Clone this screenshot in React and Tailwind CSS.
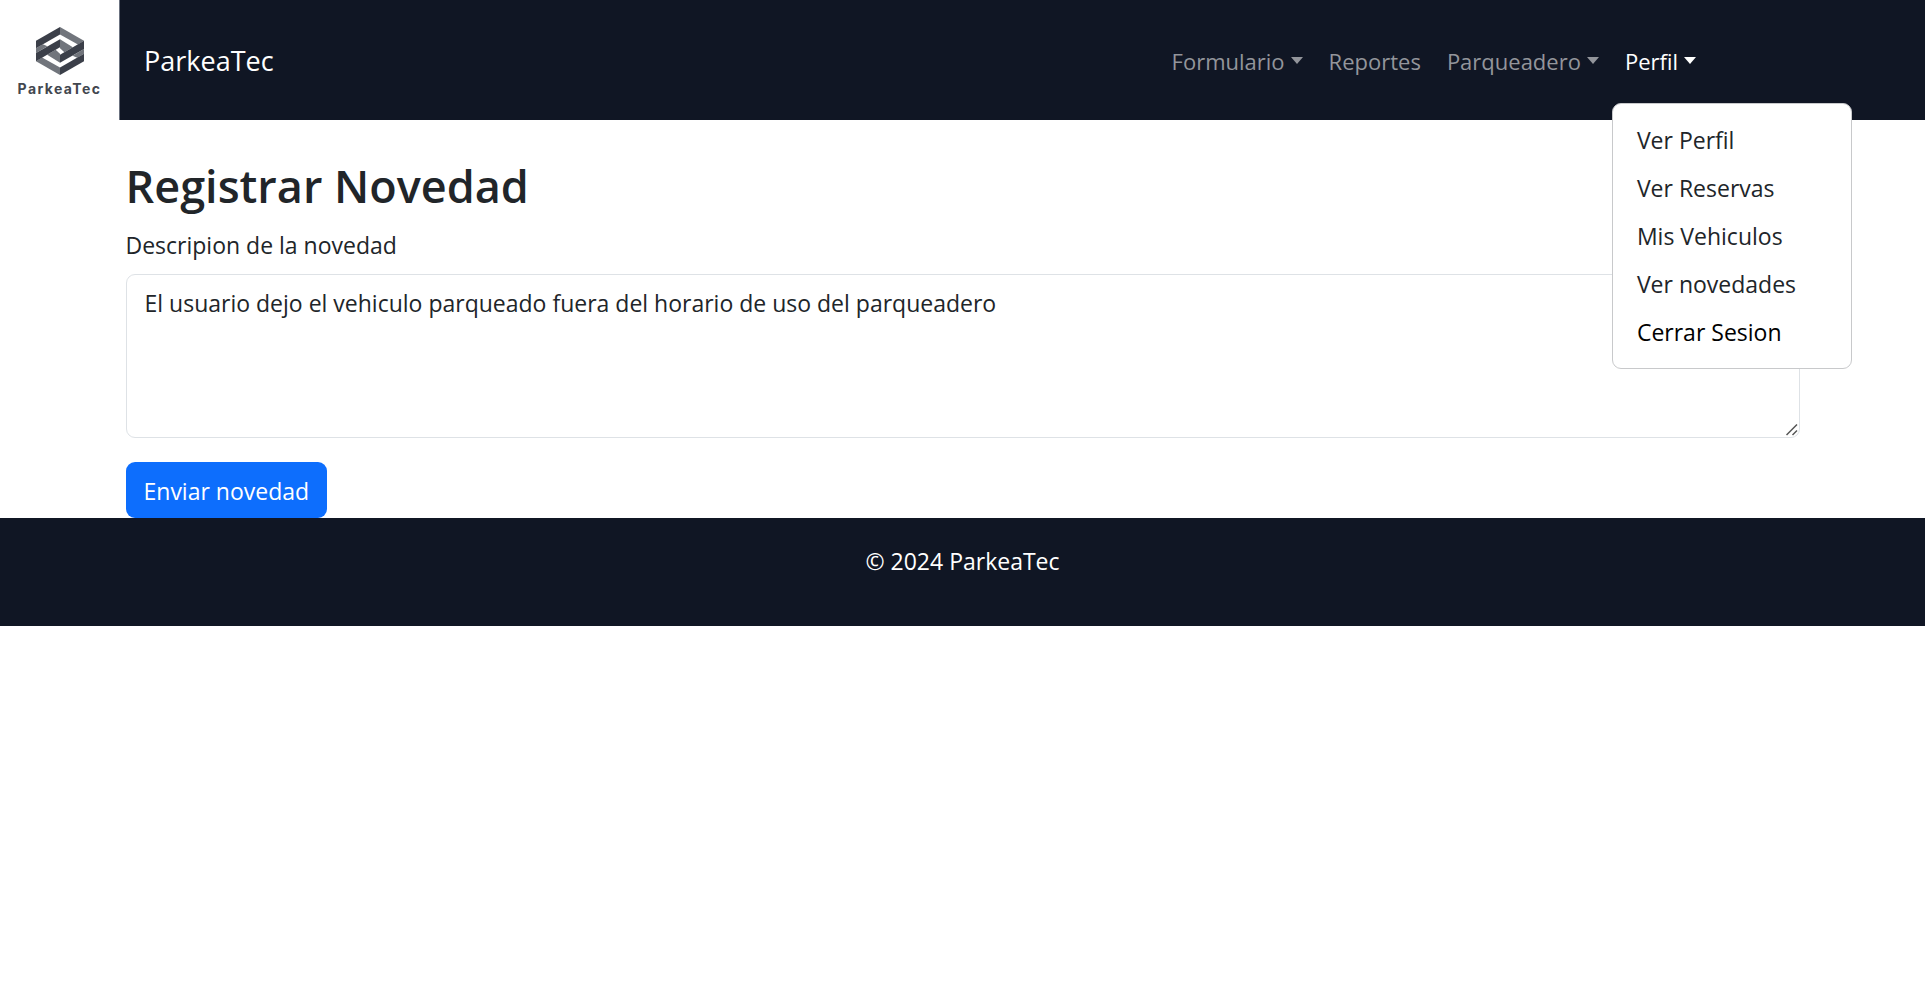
import React from "react";

function Logo() {
  return (
    <a
      href="#inicio"
      aria-label="ParkeaTec inicio"
      className="flex h-[120px] w-[120px] shrink-0 flex-col items-center border-r border-[#6b7280] bg-white pt-[27px] text-[#43474f]"
    >
      <svg viewBox="108 81 142 142" className="h-12 w-12 shrink-0" aria-hidden="true">
        <g fill="#71757c">
          <polygon points="179,81 250,122 232,133 179,103" />
          <polygon points="179,223 108,182 126,171 179,201" />
          <polygon points="179,117 217,141 192,156 179,144" />
          <polygon points="179,187 141,163 166,148 179,160" />
          <polygon points="108,144 128,132 142,138 108,158" />
          <polygon points="250,160 230,172 216,166 250,146" />
        </g>
        <g fill="#3b3f49">
          <polygon points="108,122 179,81 179,103 108,144" />
          <polygon points="250,182 179,223 179,201 250,160" />
          <polygon points="250,122 250,146 179,187 179,163" />
          <polygon points="108,182 108,158 179,117 179,141" />
        </g>
      </svg>
      <span className="mt-1 font-[Inter,sans-serif] text-sm leading-5 font-bold tracking-widest">ParkeaTec</span>
    </a>
  );
}

function Caret() {
  return (
    <svg viewBox="0 0 12 7" className="mb-0.5 ml-1.5 h-[7px] w-3" aria-hidden="true">
      <path d="M0 0h12L6 7z" fill="currentColor" />
    </svg>
  );
}

const menuItems = ["Ver Perfil", "Ver Reservas", "Mis Vehiculos", "Ver novedades"];

function Menu() {
  return (
    <div className="absolute top-full left-0 z-10 mt-[18px] w-60 rounded-[9px] border border-[#c8c9cb] bg-white py-3 text-[23px]">
      {menuItems.map((item) => (
        <a key={item} href="#perfil" className="block px-6 py-1.5 leading-9 text-[#212529]">
          {item}
        </a>
      ))}
      <button type="button" className="block w-full px-6 py-1.5 text-left leading-9 text-black">
        Cerrar Sesion
      </button>
    </div>
  );
}

export default function App() {
  return (
    <div className="min-h-screen bg-white font-['Open_Sans',sans-serif] text-[23px] leading-9 text-[#212529]">
      <header className="flex items-center bg-[#101624] text-[#93959b]">
        <Logo />
        <a href="#inicio" className="ml-6 pt-0.5 text-[27px] text-white">
          ParkeaTec
        </a>
        <nav className="mr-[216px] ml-auto flex items-center pt-0.5 text-[22px]">
          <button type="button" className="flex items-center px-[13px] py-1.5">
            Formulario
            <Caret />
          </button>
          <a href="#reportes" className="px-[13px] py-1.5">
            Reportes
          </a>
          <button type="button" className="flex items-center px-[13px] py-1.5">
            Parqueadero
            <Caret />
          </button>
          <div className="relative">
            <button type="button" aria-expanded="true" className="flex items-center px-[13px] py-1.5 text-white">
              Perfil
              <Caret />
            </button>
            <Menu />
          </div>
        </nav>
      </header>

      <main className="mx-auto max-w-[1710px] px-[18px] pt-[37px]">
        <h1 className="mb-3 text-[45px] leading-[58px] font-semibold">Registrar Novedad</h1>
        <form onSubmit={(e) => e.preventDefault()}>
          <label htmlFor="descripcion" className="mb-[11px] block">
            Descripion de la novedad
          </label>
          <div className="relative">
            <textarea
              id="descripcion"
              spellCheck={false}
              className="block h-[164px] w-full resize-none rounded-[9px] border border-[#dee2e6] bg-white px-[18px] py-[10px] outline-none"
              defaultValue="El usuario dejo el vehiculo parqueado fuera del horario de uso del parqueadero"
            />
            <svg
              viewBox="0 0 12 12"
              className="pointer-events-none absolute right-0.5 bottom-0.5 h-3 w-3"
              aria-hidden="true"
            >
              <path d="M0.5 11L11 0.5M6.5 11L11 6.5" stroke="#555" strokeWidth="1.5" fill="none" />
            </svg>
          </div>
          <button type="submit" className="mt-6 block rounded-[9px] bg-[#0d6efd] px-[18px] pt-[11px] pb-[9px] text-white">
            Enviar novedad
          </button>
        </form>
      </main>

      <footer className="bg-[#101624] pt-[25px] pb-[47px] text-center text-white">
        <p>© 2024 ParkeaTec</p>
      </footer>
    </div>
  );
}
